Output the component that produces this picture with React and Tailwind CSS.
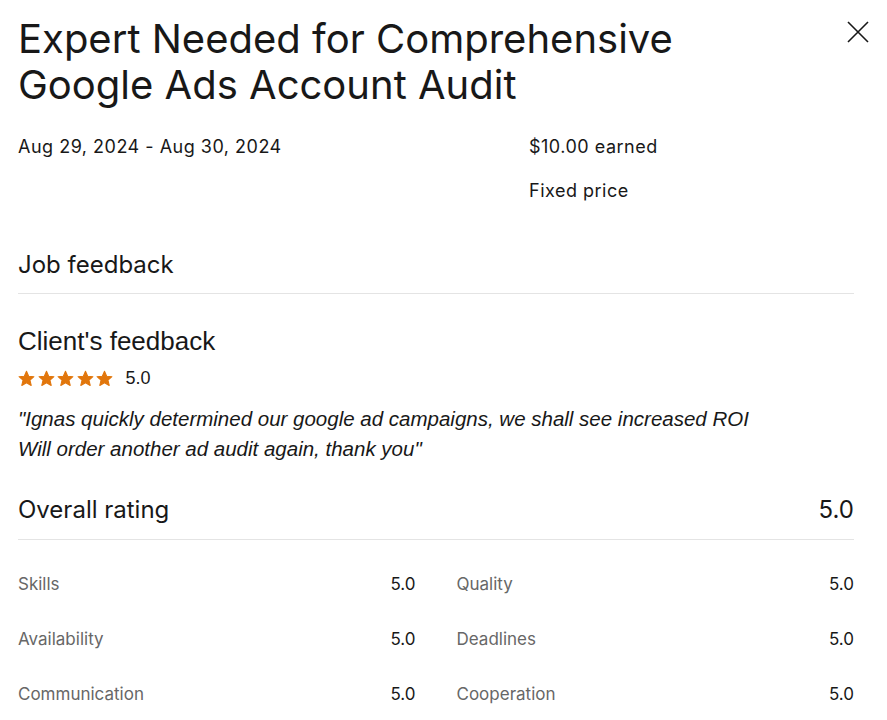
import React from "react";

const Star = () => (
  <svg width="17" height="17" viewBox="0 0 24 24" className="block">
    <path
      d="M12 1.8l3.1 6.9 7.4.7-5.6 5 1.7 7.4L12 17.9l-6.6 3.9 1.7-7.4-5.6-5 7.4-.7z"
      fill="#e1760c"
      stroke="#e1760c"
      strokeWidth="1.5"
      strokeLinejoin="round"
    />
  </svg>
);

const Row = ({ label, value }) => (
  <div className="flex items-center justify-between h-[55px]">
    <span className="text-[17px] text-[#676767]">{label}</span>
    <span className="text-[17px] text-[#181818]">{value}</span>
  </div>
);

export default function App() {
  return (
    <div
      className="relative w-[887px] h-[720px] overflow-hidden bg-white text-[#181818]"
      style={{ fontFamily: "Inter, 'Liberation Sans', sans-serif" }}
    >
      <button className="absolute right-[17px] top-[20px] w-[24px] h-[24px] flex items-center justify-center">
        <svg width="24" height="24" viewBox="0 0 24 24" fill="none" stroke="#181818" strokeWidth="1.6">
          <path d="M2 2l20 20M22 2L2 22" />
        </svg>
      </button>
      <div className="pl-[18px] pr-[33px] pt-[16px]">
        <h1 className="text-[40px] leading-[46px] font-normal tracking-[0px] pr-[150px]">
          Expert Needed for Comprehensive Google Ads Account Audit
        </h1>
        <div className="flex mt-[25px]">
          <div className="w-[511px] text-[18px] leading-[28px] tracking-[0.5px]">Aug 29, 2024 - Aug 30, 2024</div>
          <div className="flex flex-col gap-[16px] text-[18px] leading-[28px] tracking-[0.5px]">
            <span>$10.00 earned</span>
            <span>Fixed price</span>
          </div>
        </div>
        <div className="mt-[45px] pb-[13px] border-b border-[#e4e4e4] text-[24px] leading-[30px]">
          Job feedback
        </div>
        <div
          className="mt-[31px] text-[26px] leading-[32px]"
          style={{ fontFamily: "'Liberation Sans', Arial, sans-serif" }}
        >
          Client's feedback
        </div>
        <div className="flex items-center gap-[2.5px] mt-[11px]">
          <Star />
          <Star />
          <Star />
          <Star />
          <Star />
          <span
            className="ml-[10px] text-[18px] leading-[20px]"
            style={{ fontFamily: "'Liberation Sans', Arial, sans-serif" }}
          >
            5.0
          </span>
        </div>
        <p
          className="mt-[16px] italic text-[20.5px] leading-[30px]"
          style={{ fontFamily: "'Liberation Sans', Arial, sans-serif" }}
        >
          "Ignas quickly determined our google ad campaigns, we shall see increased ROI
          <br />
          Will order another ad audit again, thank you"
        </p>
        <div className="mt-[30px] pb-[13px] border-b border-[#e4e4e4] flex justify-between text-[24px] leading-[32px]">
          <span>Overall rating</span>
          <span>5.0</span>
        </div>
        <div className="grid grid-cols-2 gap-x-[41px] mt-[17px]">
          <Row label="Skills" value="5.0" />
          <Row label="Quality" value="5.0" />
          <Row label="Availability" value="5.0" />
          <Row label="Deadlines" value="5.0" />
          <Row label="Communication" value="5.0" />
          <Row label="Cooperation" value="5.0" />
        </div>
      </div>
    </div>
  );
}
